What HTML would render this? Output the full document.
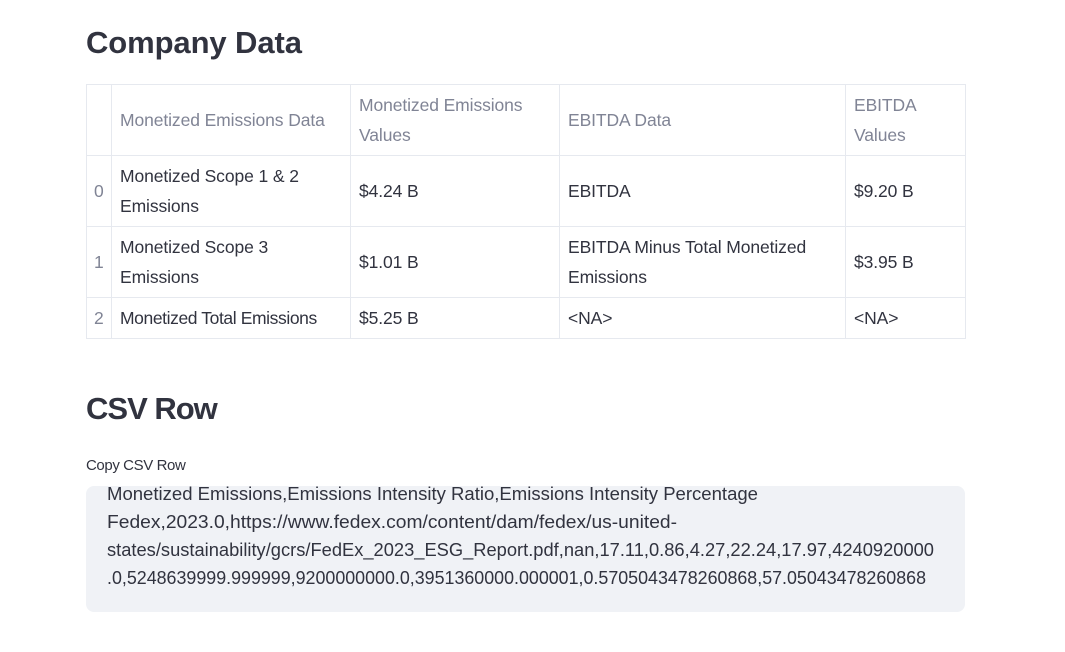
<!DOCTYPE html>
<html><head><meta charset="utf-8"><style>
body{margin:0;background:#fff;width:1065px;height:652px;overflow:hidden;font-family:"Liberation Sans",sans-serif;color:#31333f;position:relative}
h1{position:absolute;left:86px;margin:0;font-size:31px;font-weight:bold;letter-spacing:-0.1px}
table{position:absolute;left:86px;top:84px;border-collapse:collapse;font-size:17.5px;letter-spacing:-0.1px;table-layout:fixed;width:880px}
td,th{border:1px solid #e6e9ef;padding:0 8px;line-height:30px;text-align:left;font-weight:normal;vertical-align:middle;white-space:nowrap;overflow:visible}
th{color:#808495}
td.i{color:#808495;padding:0 4px 0 7px}
.lbl{position:absolute;left:86px;top:457px;font-size:15px;letter-spacing:-0.4px}
.ta{position:absolute;left:86px;top:486px;width:879px;height:126px;background:#f0f2f6;border-radius:8px;overflow:hidden}
</style></head><body>
<h1 style="top:25px">Company Data</h1>
<table>
<colgroup><col style="width:25px"><col style="width:239px"><col style="width:209px"><col style="width:286px"><col style="width:120px"></colgroup>
<tr style="height:71px"><th></th><th>Monetized Emissions Data</th><th>Monetized Emissions<br>Values</th><th>EBITDA Data</th><th>EBITDA<br>Values</th></tr>
<tr style="height:71px"><td class="i">0</td><td>Monetized Scope 1 &amp; 2<br>Emissions</td><td>$4.24 B</td><td>EBITDA</td><td>$9.20 B</td></tr>
<tr style="height:71px"><td class="i">1</td><td>Monetized Scope 3<br>Emissions</td><td>$1.01 B</td><td>EBITDA Minus Total Monetized<br>Emissions</td><td>$3.95 B</td></tr>
<tr style="height:41px"><td class="i">2</td><td style="letter-spacing:-0.4px">Monetized Total Emissions</td><td>$5.25 B</td><td>&lt;NA&gt;</td><td>&lt;NA&gt;</td></tr>
</table>
<h1 style="top:391px;letter-spacing:-1px">CSV Row</h1>
<div class="lbl">Copy CSV Row</div>
<div class="ta"><svg width="879" height="126" style="position:absolute;left:0;top:0" font-family="Liberation Sans, sans-serif" font-size="18" fill="#31333f">
<text x="21" y="14" textLength="651" lengthAdjust="spacingAndGlyphs">Monetized Emissions,Emissions Intensity Ratio,Emissions Intensity Percentage</text>
<text x="21" y="42" textLength="570" lengthAdjust="spacingAndGlyphs">Fedex,2023.0,https://www.fedex.com/content/dam/fedex/us-united-</text>
<text x="21" y="70" textLength="827" lengthAdjust="spacingAndGlyphs">states/sustainability/gcrs/FedEx_2023_ESG_Report.pdf,nan,17.11,0.86,4.27,22.24,17.97,4240920000</text>
<text x="21" y="98" textLength="819" lengthAdjust="spacingAndGlyphs">.0,5248639999.999999,9200000000.0,3951360000.000001,0.5705043478260868,57.05043478260868</text>
</svg></div>
</body></html>
